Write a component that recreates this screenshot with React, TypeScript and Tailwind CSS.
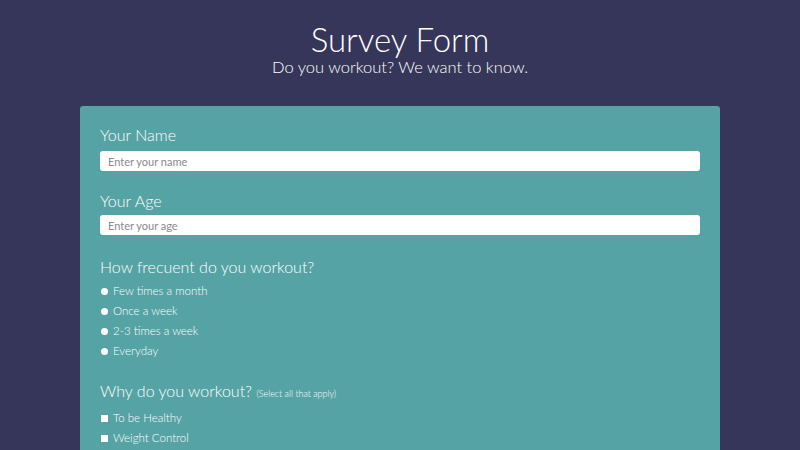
import { useState } from 'react'

const frequencies = ['Few times a month', 'Once a week', '2-3 times a week', 'Everyday']
const reasons = ['To be Healthy', 'Weight Control']

export default function App() {
  const [freq, setFreq] = useState('')
  const [checked, setChecked] = useState<string[]>([])

  const toggle = (r: string) => {
    setChecked(c => (c.includes(r) ? c.filter(x => x !== r) : [...c, r]))
  }

  return (
    <div className="min-h-[450px] bg-[#353659] text-white font-['Lato','Noto_Sans',sans-serif] font-light overflow-hidden">
      <header className="flex flex-col items-center pt-[19px]">
        <h1 className="text-[33px] leading-[40px]">Survey Form</h1>
        <p className="text-[16.5px] leading-[16px]">Do you workout? We want to know.</p>
      </header>

      <form className="mx-[80px] mt-[31px] bg-[#56a3a6] rounded-[3px] px-[20px] pt-[17px] pb-[20px]">
        <label className="block text-[16px] leading-[24px]">Your Name</label>
        <input
          type="text"
          placeholder="Enter your name"
          className="block mt-[4px] w-full h-[20px] rounded-[3px] bg-white px-[8px] text-[11px] font-normal text-gray-800 placeholder:text-[#8a8a8a] outline-none"
        />

        <label className="block mt-[18px] text-[16px] leading-[24px]">Your Age</label>
        <input
          type="number"
          placeholder="Enter your age"
          className="block mt-[2px] w-full h-[20px] rounded-[3px] bg-white px-[8px] text-[11px] font-normal text-gray-800 placeholder:text-[#8a8a8a] outline-none"
        />

        <p className="mt-[20px] text-[16px] leading-[24px]">How frecuent do you workout?</p>
        <div className="mt-[2px] flex flex-col">
          {frequencies.map(f => (
            <label key={f} className="flex items-center h-[20px] text-[11.5px] cursor-pointer" onClick={() => setFreq(f)}>
              <span className="ml-[1px] w-[7px] h-[7px] rounded-full bg-white flex items-center justify-center">
                {freq === f && <span className="w-[3px] h-[3px] rounded-full bg-[#353659]" />}
              </span>
              <span className="ml-[5px]">{f}</span>
            </label>
          ))}
        </div>

        <p className="mt-[18px] text-[16px] leading-[24px]">
          Why do you workout? <span className="text-[9px]">(Select all that apply)</span>
        </p>
        <div className="mt-[2px] flex flex-col">
          {reasons.map(r => (
            <label key={r} className="flex items-center h-[20px] text-[11.5px] cursor-pointer" onClick={() => toggle(r)}>
              <span className="ml-[1px] w-[7px] h-[7px] bg-white flex items-center justify-center text-[7px] leading-none text-[#353659]">
                {checked.includes(r) ? '✓' : ''}
              </span>
              <span className="ml-[5px]">{r}</span>
            </label>
          ))}
        </div>
      </form>
    </div>
  )
}
